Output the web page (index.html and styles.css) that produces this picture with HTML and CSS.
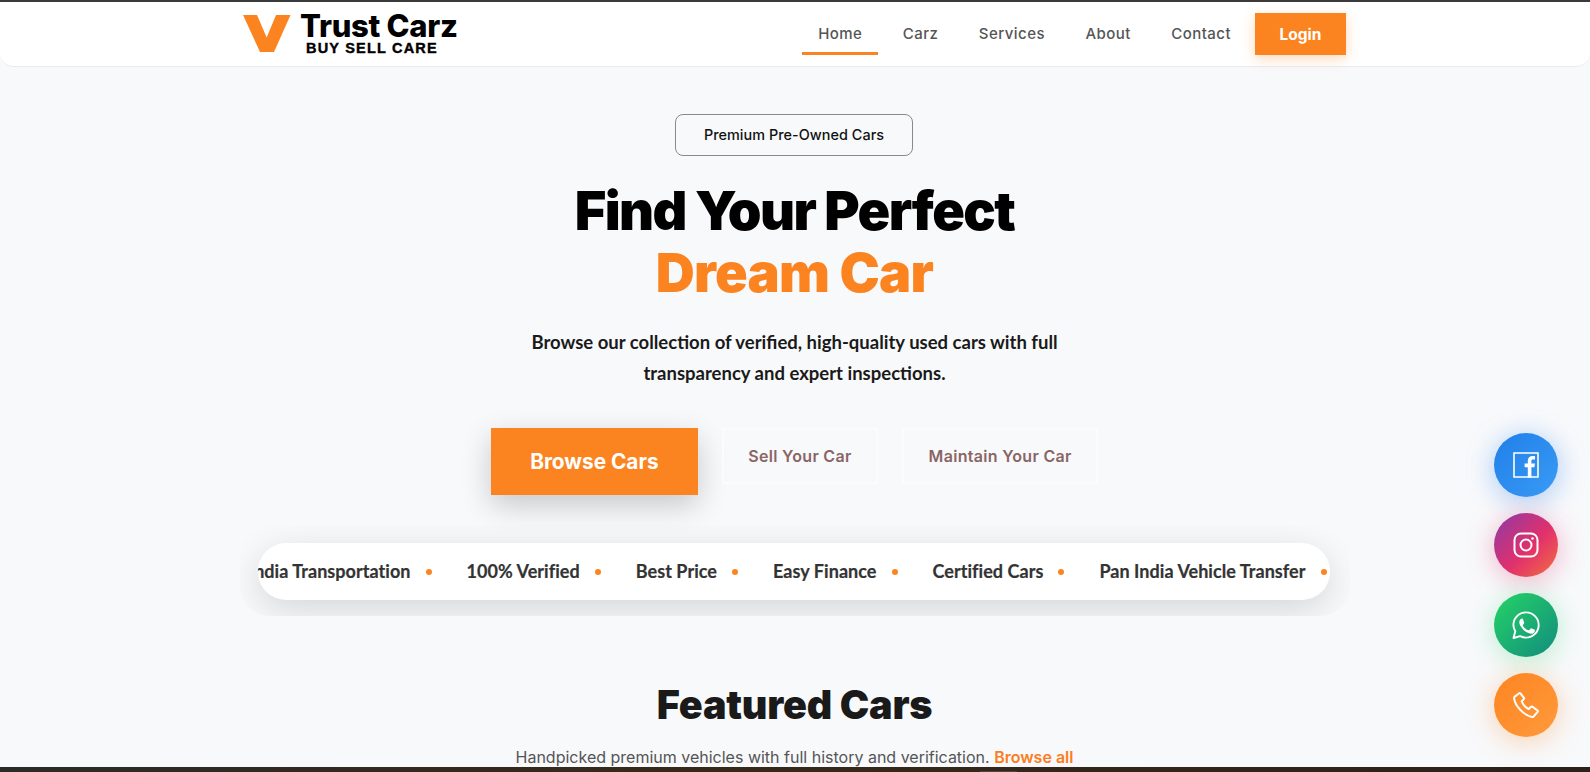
FILE: index.html
```html
<!DOCTYPE html>
<html lang="en">
<head>
<meta charset="utf-8">
<title>Trust Carz</title>
<link rel="stylesheet" href="styles.css">
</head>
<body>
<div class="page">
  <header class="navbar">
    <div class="nav-inner">
      <a class="logo" href="#">
        <svg class="logo-v" viewBox="0 0 48 37" width="48" height="37" aria-hidden="true"><path d="M0 0H14L23.700 22.500L33 0H47.500L31 37H17Z" fill="#fb8420"/></svg>
        <span class="logo-text">
          <span class="logo-name">Trust Carz</span>
          <span class="logo-tag">BUY SELL CARE</span>
        </span>
      </a>
      <nav class="nav-links">
        <a class="nav-link active" href="#">Home</a>
        <a class="nav-link" href="#">Carz</a>
        <a class="nav-link" href="#">Services</a>
        <a class="nav-link" href="#">About</a>
        <a class="nav-link" href="#">Contact</a>
        <a class="login" href="#">Login</a>
      </nav>
    </div>
  </header>

  <main class="main">
    <section class="hero">
      <div class="badge">Premium Pre-Owned Cars</div>
      <h1 class="title">Find Your Perfect<span class="accent">Dream Car</span></h1>
      <p class="lead">Browse our collection of verified, high-quality used cars with full transparency and expert inspections.</p>
      <div class="actions">
        <a class="btn-primary" href="#">Browse Cars</a>
        <a class="btn-ghost" href="#">Sell Your Car</a>
        <a class="btn-ghost" href="#">Maintain Your Car</a>
      </div>
      <div class="ticker-clip">
        <div class="ticker">
          <div class="track">
            <span class="tick">Pan India Transportation</span><i class="dot"></i>
            <span class="tick">100% Verified</span><i class="dot"></i>
            <span class="tick">Best Price</span><i class="dot"></i>
            <span class="tick">Easy Finance</span><i class="dot"></i>
            <span class="tick">Certified Cars</span><i class="dot"></i>
            <span class="tick">Pan India Vehicle Transfer</span><i class="dot"></i>
          </div>
        </div>
      </div>
    </section>
    <section class="featured">
      <h2 class="featured-title">Featured Cars</h2>
      <p class="featured-sub">Handpicked premium vehicles with full history and verification. <a class="browse-all" href="#">Browse all</a></p>
    </section>
  </main>
  <div class="next-section"></div>
</div>

<aside class="socials">
  <a class="social fb" href="#" aria-label="Facebook">
    <svg viewBox="0 0 26 26" width="26" height="26" aria-hidden="true"><path fill="none" stroke="#fff" stroke-width="1.600" d="M1 1H25V25H1Z"/><path fill="#fff" d="M14.800 25.500V15.200H11.600V11.500H14.800V8.800C14.800 5.600 16.700 4 19.600 4C20.800 4 21.700 4.100 22 4.100V7.400H20.100C18.600 7.400 18.400 8.100 18.400 9.100V11.500H21.900L21.400 15.200H18.400V25.500Z"/></svg>
  </a>
  <a class="social ig" href="#" aria-label="Instagram">
    <svg viewBox="0 0 26 26" width="26" height="26" fill="none" stroke="#fff" stroke-width="2" aria-hidden="true"><rect x="1.500" y="1.500" width="23" height="23" rx="6.500"/><circle cx="13" cy="13" r="5.500"/><circle cx="19.500" cy="6.500" r="1.300" fill="#fff" stroke="none"/></svg>
  </a>
  <a class="social wa" href="#" aria-label="WhatsApp">
    <svg viewBox="0 0 28 28" width="28" height="28" fill="none" aria-hidden="true"><path stroke="#fff" stroke-width="1.900" stroke-linejoin="round" d="M1.500 27L3.300 20.300C2.100 18.300 1.400 16.200 1.400 14C1.400 7 7 1.400 14 1.400C21 1.400 26.700 7 26.700 14C26.700 21 21 26.600 14 26.600C11.900 26.600 9.900 26.100 8.100 25.100Z"/><path fill="#fff" d="M10.300 7.400C9.800 7.400 9.100 7.600 8.500 8.300C7.900 8.900 7.300 9.900 7.300 11.300C7.300 13.400 8.800 15.400 9.100 15.800C9.300 16.100 12 20.500 16.300 22C19.800 23.300 20.800 22.700 21.700 22C22.500 21.300 22.900 20.100 22.900 19.500C22.900 19 22.700 18.800 22.300 18.600L19.700 17.400C19.200 17.200 18.900 17.200 18.500 17.700L17.400 19C17.100 19.300 16.800 19.400 16.400 19.200C15.900 19 14.300 18.500 12.900 17.200C11.900 16.300 11.100 15.100 10.900 14.700C10.700 14.300 10.800 14 11.100 13.700L12 12.600C12.200 12.300 12.300 12 12.100 11.600L11.100 8.400C10.900 7.700 10.700 7.400 10.300 7.400Z"/></svg>
  </a>
  <a class="social ph" href="#" aria-label="Phone">
    <svg viewBox="0 0 26 26" width="26" height="26" fill="none" stroke="#fff" stroke-width="2" stroke-linejoin="round" aria-hidden="true"><path d="M6.200 1.300L1.700 4.600C1.100 5 1 5.700 1.100 6.400C2 13.800 10.800 23.500 19.100 24.900C19.800 25 20.500 24.800 20.900 24.200L24.800 19.700C25.100 19.300 25 18.800 24.600 18.500L19.300 14.600C18.900 14.300 18.400 14.400 18 14.700L15.800 17C13 15.600 9.800 12.100 8.700 9.300L10.800 7.100C11.200 6.700 11.200 6.200 11 5.800L7.500 1.500C7.200 1.100 6.600 1 6.200 1.300Z"/></svg>
  </a>
</aside>
</body>
</html>
```
FILE: styles.css
```css
* { box-sizing: border-box; }
html, body { margin: 0; height: 100%; overflow: hidden; }
body { background: #f8f9fb; font-family: Inter, "Liberation Sans", sans-serif; color: #111; }
a { text-decoration: none; color: inherit; }

.page { height: 772px; display: flex; flex-direction: column; border-top: 2px solid #3a3a3a; }

.navbar { height: 65px; flex: none; background: #fff; border-bottom: 1px solid #e9ecef; border-radius: 0 0 14px 14px; }
.nav-inner { width: 1103px; margin: 0 0 0 243px; height: 100%; display: flex; align-items: center; justify-content: space-between; }

.logo { display: flex; align-items: center; gap: 9px; margin-bottom: 2px; color: #000; }
.logo-v { flex: none; }
.logo-text { display: flex; flex-direction: column; align-items: flex-start; }
.logo-name { font: 800 31px/30px Inter, sans-serif; letter-spacing: -.3px; }
.logo-tag { font: 700 14.500px/15px "Liberation Sans", sans-serif; letter-spacing: 1.200px; margin-left: 6px; -webkit-text-stroke: .4px #000; }

.nav-links { display: flex; align-items: center; }
.nav-link { position: relative; height: 42px; padding: 0 16px 2px; display: flex; align-items: center; font-size: 15px; font-weight: 500; letter-spacing: .45px; color: #555; }
.nav-link + .nav-link { margin-left: 8.500px; }
.nav-link.active::after { content: ""; position: absolute; left: 0; right: 0; bottom: 0; height: 3px; background: #fb8420; }
.login { margin-left: 8px; width: 91px; height: 42px; display: flex; align-items: center; justify-content: center; background: #fb8420; color: #fff; font-size: 15.500px; font-weight: 700; box-shadow: 0 4px 12px rgba(251,132,32,.3); }

.main { flex: 1; min-height: 0; display: flex; flex-direction: column; align-items: center; overflow: hidden; padding-right: 1px; }

.hero { display: flex; flex-direction: column; align-items: center; padding-top: 47px; }
.badge { width: 238px; height: 42px; margin-right: 1px; padding-bottom: 2px; display: flex; align-items: center; justify-content: center; border: 1px solid #8a8a8a; border-radius: 8px; font-size: 14.400px; font-weight: 550; letter-spacing: .05px; color: #111; }
.title { margin: 24px 0 0; text-align: center; font-family: Inter, sans-serif; font-size: 54px; line-height: 62px; font-weight: 900; color: #000; letter-spacing: -1.600px; }
.accent { display: block; color: #fb8420; letter-spacing: -.7px; }
.lead { width: 570px; margin: 23px 0 0; text-align: center; font-family: Lato, sans-serif; font-size: 18.500px; line-height: 31px; font-weight: 700; color: #1a1a1a; }
.actions { display: flex; align-items: flex-start; gap: 24px; margin-top: 39px; }
.btn-primary { width: 207px; height: 67px; display: flex; align-items: center; justify-content: center; background: #fb8420; color: #fff; font-size: 20.800px; font-weight: 700; box-shadow: 0 10px 30px rgba(0,0,0,.2); }
.btn-ghost { height: 56px; padding: 0 24.500px; display: flex; align-items: center; border: 2px solid rgba(255,255,255,.5); font-size: 16px; font-weight: 600; letter-spacing: .3px; color: #8a6565; }

.ticker-clip { width: 1110px; height: 91px; margin-top: 30px; padding: 18px 18px 0; overflow: hidden; border-radius: 0 0 30px 30px; }
.ticker { width: 1072px; height: 57px; background: #fff; border-radius: 28px; box-shadow: 0 10px 36px rgba(0,0,0,.14); overflow: hidden; display: flex; justify-content: flex-end; align-items: center; }
.track { flex: none; display: flex; align-items: center; padding: 0 3px 2px 0; font-family: Lato, sans-serif; font-size: 18px; font-weight: 700; letter-spacing: .05px; color: #333; white-space: nowrap; -webkit-text-stroke: .2px #333; }
.tick { margin-right: 15px; }
.dot { width: 6px; height: 6px; border-radius: 50%; background: #fb8420; margin: 2px 35px 0 0; }
.dot:last-child { margin-right: 0; }

.featured { display: flex; flex-direction: column; align-items: center; margin-top: 64px; }
.featured-title { margin: 0; font-family: Inter, sans-serif; font-size: 39.500px; line-height: 50px; font-weight: 900; letter-spacing: -.2px; color: #1a1a1a; }
.featured-sub { margin: 15px 0 0; font-size: 16px; line-height: 24px; color: #555; white-space: nowrap; }
.browse-all { color: #fb7d1e; font-weight: 600; }

.next-section { height: 5px; flex: none; background: linear-gradient(#4a4540, #4a4540) 980px 4px / 37px 1px no-repeat, linear-gradient(90deg, #2c2a27, #38281a 45%, #2b2119); }

.socials { position: fixed; left: 1494px; top: 433px; display: flex; flex-direction: column; gap: 16px; }
.social { width: 64px; height: 64px; border-radius: 50%; display: flex; align-items: center; justify-content: center; }
.fb { background: linear-gradient(135deg, #1f7fe8, #3b9bf6); box-shadow: 0 4px 28px rgba(40,130,240,.4); }
.ig { background: linear-gradient(135deg, #8b3ba8, #e1306c 55%, #f4703f); box-shadow: 0 4px 28px rgba(225,48,108,.35); }
.wa { background: linear-gradient(135deg, #25d366, #128c7e); box-shadow: 0 4px 28px rgba(37,211,102,.3); }
.ph { background: linear-gradient(135deg, #fd8421, #ff9a3c); box-shadow: 0 4px 28px rgba(251,132,32,.35); }
```
